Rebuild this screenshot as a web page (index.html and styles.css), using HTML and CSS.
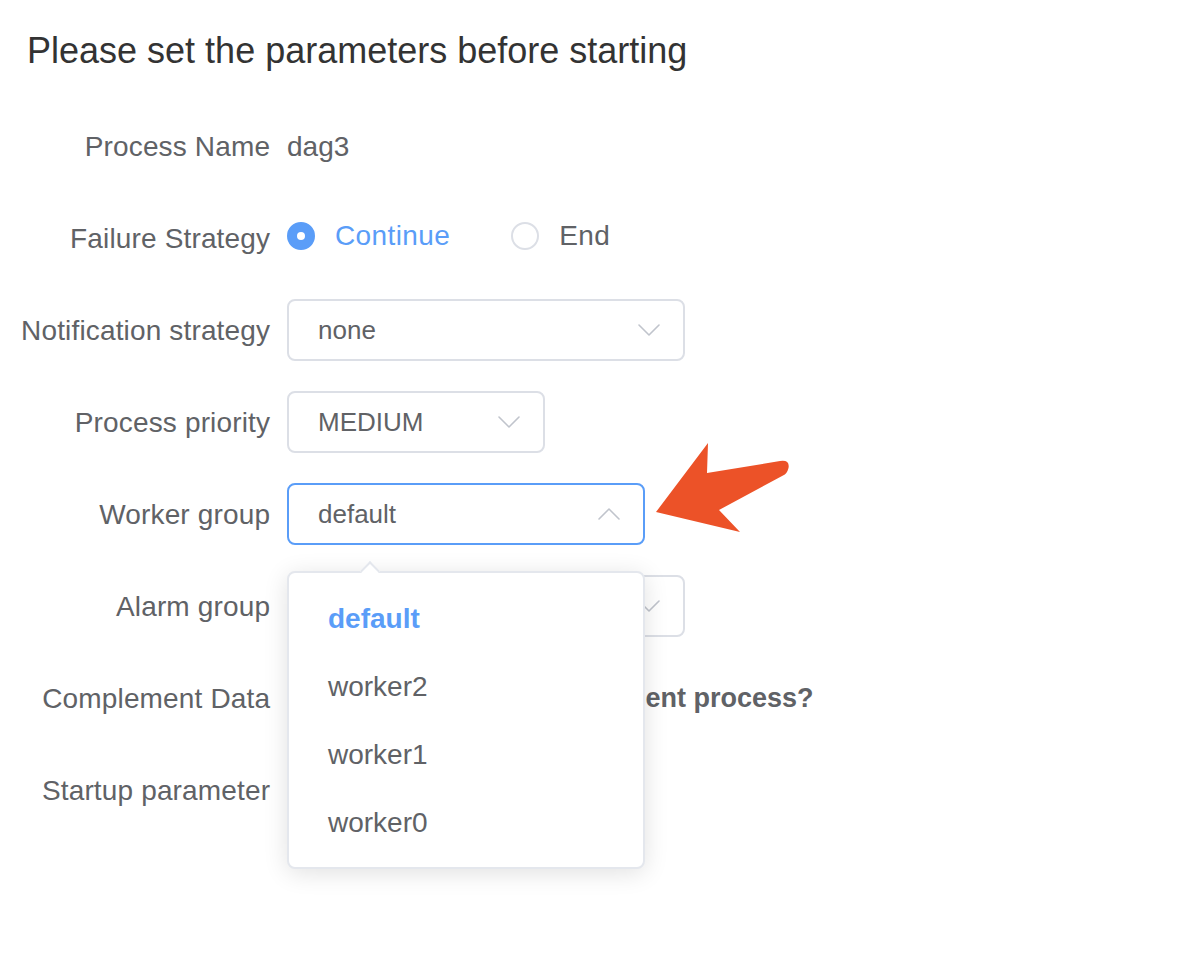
FILE: index.html
```html
<!DOCTYPE html>
<html lang="en">
<head>
<meta charset="utf-8">
<title>Start process</title>
<link rel="stylesheet" href="styles.css">
</head>
<body>
<div class="panel">
  <h1 class="panel-title">Please set the parameters before starting</h1>

  <div class="form">
    <div class="form-row">
      <div class="form-label">Process Name</div>
      <div class="form-value plain">dag3</div>
    </div>

    <div class="form-row">
      <div class="form-label">Failure Strategy</div>
      <div class="form-value radios">
        <label class="radio checked"><span class="radio-dot"></span><span class="radio-text">Continue</span></label>
        <label class="radio"><span class="radio-dot"></span><span class="radio-text">End</span></label>
      </div>
    </div>

    <div class="form-row">
      <div class="form-label">Notification strategy</div>
      <div class="form-value">
        <div class="select w-398">
          <span class="select-text">none</span>
          <svg class="chevron" width="22" height="12" viewBox="0 0 22 12"><polyline points="1,1 11,11 21,1"/></svg>
        </div>
      </div>
    </div>

    <div class="form-row">
      <div class="form-label">Process priority</div>
      <div class="form-value">
        <div class="select w-258">
          <span class="select-text">MEDIUM</span>
          <svg class="chevron" width="22" height="12" viewBox="0 0 22 12"><polyline points="1,1 11,11 21,1"/></svg>
        </div>
      </div>
    </div>

    <div class="form-row">
      <div class="form-label">Worker group</div>
      <div class="form-value">
        <div class="select-wrap">
          <div class="select w-358 focused">
            <span class="select-text">default</span>
            <svg class="chevron" width="22" height="12" viewBox="0 0 22 12"><polyline points="1,11 11,1 21,11"/></svg>
          </div>
          <div class="dropdown">
            <span class="dropdown-pointer"></span>
            <ul class="dropdown-list">
              <li class="dropdown-item selected">default</li>
              <li class="dropdown-item">worker2</li>
              <li class="dropdown-item">worker1</li>
              <li class="dropdown-item">worker0</li>
            </ul>
          </div>
        </div>
      </div>
    </div>

    <div class="form-row">
      <div class="form-label">Alarm group</div>
      <div class="form-value">
        <div class="select w-398">
          <span class="select-text"></span>
          <svg class="chevron" width="22" height="12" viewBox="0 0 22 12"><polyline points="1,1 11,11 21,1"/></svg>
        </div>
      </div>
    </div>

    <div class="form-row">
      <div class="form-label">Complement Data</div>
      <div class="form-value check">
        <span class="checkbox"></span>
        <span class="check-text">Whether it is a complement process?</span>
      </div>
    </div>

    <div class="form-row">
      <div class="form-label">Startup parameter</div>
      <div class="form-value"></div>
    </div>
  </div>

  <svg class="callout-arrow" width="150" height="100" viewBox="0 0 150 100">
    <path d="M6 72 L58 3 L57 33 L130 21 Q140 19.5 138.5 28 Q137 34 133 35.5 L69 70 L90 92 Z"/>
  </svg>
</div>
</body>
</html>
```

FILE: styles.css
```css
html, body {
  margin: 0;
  background: #ffffff;
}

body {
  font-family: "Liberation Sans", Helvetica, Arial, sans-serif;
  color: #606266;
}

.panel {
  position: relative;
  width: 1190px;
  height: 978px;
  overflow: hidden;
}

.panel-title {
  margin: 0;
  padding: 31px 0 0 27px;
  font-size: 36px;
  line-height: 40px;
  font-weight: 400;
  color: #333333;
}

.form {
  margin-top: 44px;
  display: flex;
  flex-direction: column;
  gap: 30px;
}

.form-row {
  display: grid;
  grid-template-columns: 270px 1fr;
  column-gap: 17px;
  height: 62px;
  align-items: center;
}

.form-label {
  text-align: right;
  font-size: 28px;
  letter-spacing: 0.15px;
  margin-right: -0.15px;
  white-space: nowrap;
  color: #606266;
  padding-top: 2px;
}

.form-value {
  display: flex;
  align-items: center;
  font-size: 28px;
}

.plain {
  padding-top: 2px;
}

/* radio group */
.radios {
  gap: 61px;
  margin-top: -4px;
}

.radio {
  display: flex;
  align-items: center;
  gap: 20px;
  font-weight: 500;
  letter-spacing: 0.4px;
  color: #606266;
}

.radio-dot {
  box-sizing: border-box;
  width: 28px;
  height: 28px;
  border-radius: 50%;
  border: 2px solid #dcdfe6;
  background: #fff;
  position: relative;
}

.radio.checked .radio-dot {
  border-color: #5a9df8;
  background: #5a9df8;
}

.radio.checked .radio-dot::after {
  content: "";
  position: absolute;
  left: 50%;
  top: 50%;
  width: 8px;
  height: 8px;
  margin: -4px 0 0 -4px;
  border-radius: 50%;
  background: #fff;
}

.radio.checked .radio-text {
  color: #5a9df8;
}

/* select boxes */
.select {
  box-sizing: border-box;
  height: 62px;
  border: 2px solid #dcdfe6;
  border-radius: 8px;
  background: #fff;
  display: flex;
  align-items: center;
  justify-content: space-between;
  padding: 0 23px 0 29px;
  font-size: 26px;
  color: #606266;
}

.select.focused {
  border-color: #5a9df8;
}

.w-398 { width: 398px; }
.w-358 { width: 358px; }
.w-258 { width: 258px; }

.chevron polyline {
  fill: none;
  stroke: #c0c4cc;
  stroke-width: 1.6;
  stroke-linecap: round;
  stroke-linejoin: round;
}

.select-wrap {
  position: relative;
}

/* open dropdown of the worker group select */
.dropdown {
  position: absolute;
  left: 0;
  top: 88px;
  z-index: 10;
  box-sizing: border-box;
  width: 358px;
  border: 2px solid #e4e7ed;
  border-radius: 8px;
  background: #fff;
  box-shadow: 0 4px 24px rgba(0, 0, 0, 0.12);
  padding: 12px 0 10px;
}

.dropdown-pointer {
  position: absolute;
  top: -9px;
  left: 74px;
  width: 14px;
  height: 14px;
  background: #fff;
  border-top: 2px solid #e4e7ed;
  border-left: 2px solid #e4e7ed;
  box-sizing: border-box;
  transform: rotate(45deg);
}

.dropdown-list {
  list-style: none;
  margin: 0;
  padding: 0;
}

.dropdown-item {
  height: 68px;
  line-height: 68px;
  padding-left: 39px;
  font-size: 28px;
  color: #606266;
}

.dropdown-item.selected {
  color: #5a9df8;
  font-weight: 700;
}

/* complement checkbox */
.check {
  gap: 20px;
}

.checkbox {
  box-sizing: border-box;
  width: 28px;
  height: 28px;
  border: 2px solid #dcdfe6;
  border-radius: 4px;
}

.check-text {
  font-size: 27px;
  font-weight: 700;
  color: #606266;
  white-space: nowrap;
}

/* red callout arrow drawn over the page */
.callout-arrow {
  position: absolute;
  left: 650px;
  top: 440px;
  z-index: 20;
}

.callout-arrow path {
  fill: #ec5228;
}
```
